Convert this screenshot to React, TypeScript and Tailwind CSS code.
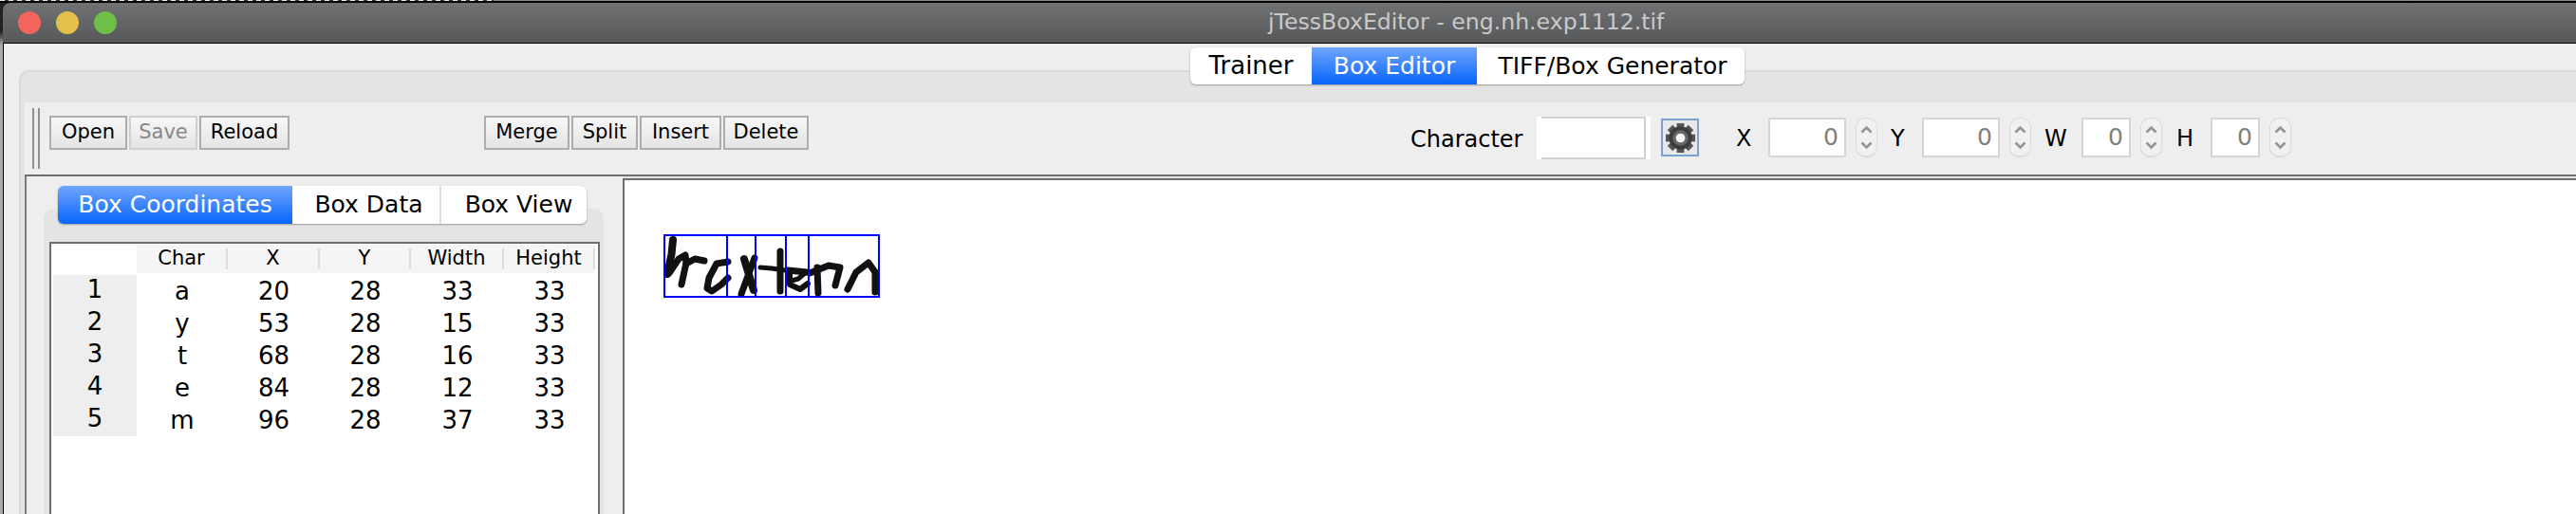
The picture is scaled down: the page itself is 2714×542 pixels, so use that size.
import React from "react";

const rows = [
  ["1", "a", "20", "28", "33", "33"],
  ["2", "y", "53", "28", "15", "33"],
  ["3", "t", "68", "28", "16", "33"],
  ["4", "e", "84", "28", "12", "33"],
  ["5", "m", "96", "28", "37", "33"],
];
const heads = ["Char", "X", "Y", "Width", "Height"];

function Btn({ label, w, off }: { label: string; w: string; off?: boolean }) {
  return (
    <div
      className={`${w} h-[36px] flex items-center justify-center border-2 text-[21px] bg-[linear-gradient(#f7f7f7,#e4e4e4)] ${
        off ? "border-[#cfcfcf] text-[#888888]" : "border-[#adadad] text-black"
      }`}
    >
      {label}
    </div>
  );
}

function Spinner() {
  return (
    <div className="ml-[10px] w-[23px] h-[42px] rounded-[10px] bg-[#f1f1f1] border border-[#dcdcdc] border-b-2 flex items-center justify-center shrink-0">
      <svg width="13" height="26" viewBox="0 0 13 26" fill="none" stroke="#949494" strokeWidth="2.6">
        <polyline points="1.5,7.5 6.5,2.5 11.5,7.5" />
        <polyline points="1.5,18.5 6.5,23.5 11.5,18.5" />
      </svg>
    </div>
  );
}

function Field({ w }: { w: string }) {
  return (
    <div className={`${w} h-[42px] bg-white border-2 border-[#d6d6d6] flex items-center justify-end pr-[6px] text-[25px] text-[#808080] shrink-0`}>
      0
    </div>
  );
}

function Gear() {
  return (
    <svg width="33" height="33" viewBox="0 0 34 34" className="blur-[0.7px]">
      {[0, 45, 90, 135].map((a) => (
        <rect key={a} x="13" y="1" width="8" height="32" fill="#555555" transform={`rotate(${a} 17 17)`} />
      ))}
      <circle cx="17" cy="17" r="12.5" fill="#3c3c3c" />
      <circle cx="17" cy="17" r="8.5" fill="#666666" />
      <circle cx="17" cy="17" r="5" fill="#f4f4f4" />
    </svg>
  );
}

function Handwriting() {
  return (
    <svg width="240" height="75" viewBox="0 0 240 75" className="block ml-[37px] mt-[53px]">
      <g fill="none" stroke="#111111" strokeLinecap="round" strokeLinejoin="round">
        <g strokeWidth="8">
          <polyline points="14,10 12.5,25 8,46" />
          <polyline points="89,30 99,63" />
        </g>
        <g strokeWidth="7">
          <polyline points="100,29 86,67" />
          <polyline points="166,39 167,66" />
          <polyline points="127,22 127,64" />
          <polyline points="10,45 20,30 27,26 28,34 23,57" />
          <polyline points="28,35 37,30 47,32" />
          <polyline points="72,33 60,35 52,50 50,61 55,64 65,57 72,50" />
          <polyline points="227,44 227,65" />
          <polyline points="198,62 207,44 220,34 227,44" />
          <polyline points="158,45 178,37 190,39 185,58" />
        </g>
        <g strokeWidth="5">
          <polyline points="106,39 118,40 132,42" />
          <polyline points="135,42 155,44" strokeWidth="7" />
          <polyline points="137,44 137,57 148,62 156,56" strokeWidth="6" />
          <polyline points="153,45 146,51 139,53" />
        </g>
      </g>
      <g fill="none" stroke="#0000ff" strokeWidth="2">
        <rect x="5" y="5" width="226" height="65" />
        <line x1="71" y1="5" x2="71" y2="70" />
        <line x1="101" y1="5" x2="101" y2="70" />
        <line x1="133" y1="5" x2="133" y2="70" />
        <line x1="157" y1="5" x2="157" y2="70" />
      </g>
    </svg>
  );
}

export default function App() {
  return (
    <div className="w-[2714px] h-[542px] overflow-hidden flex flex-col bg-[#aaaaaa] font-['DejaVu_Sans',sans-serif] text-black">
      <div className="h-[1px] shrink-0 bg-[#8a8a8a]">
        <div className="w-[520px] h-full bg-[repeating-linear-gradient(90deg,#e8e8e8_0,#e8e8e8_5px,#333333_5px,#333333_9px)]" />
      </div>
      <div className="h-[2px] shrink-0 bg-black" />
      <div className="flex-1 min-h-0 flex">
        <div className="w-[3px] shrink-0 bg-[linear-gradient(#222222_0,#222222_30px,#aaaaaa_45px)]" />
        <div className="flex-1 min-w-0 flex flex-col bg-[#222222]">
          <div className="h-[43px] shrink-0 rounded-tl-[8px] border-b border-black bg-[linear-gradient(#717274,#565758)] flex items-center pl-[16px]">
            <div className="flex gap-4">
              <div className="w-6 h-6 rounded-full bg-[#f2655c]" />
              <div className="w-6 h-6 rounded-full bg-[#e3bf4b]" />
              <div className="w-6 h-6 rounded-full bg-[#6dbf47]" />
            </div>
            <div className="ml-[1213px] text-[23.6px] text-[#c9c9c9] whitespace-nowrap">jTessBoxEditor - eng.nh.exp1112.tif</div>
          </div>

          <div className="flex-1 min-h-0 flex flex-col border-l border-black bg-[#eeeeee] pt-[28px] pl-[16px] relative">
            <div className="absolute left-[1250px] top-[4px] w-[584px] h-[39px] rounded-[6px] bg-white shadow-[0_1px_2px_#999999] flex items-center overflow-hidden text-[25px] z-10 whitespace-nowrap">
              <div className="w-[128px] text-center text-[26px]">Trainer</div>
              <div className="w-[174px] h-full flex items-center justify-center text-white bg-[linear-gradient(#70a5fb,#0765fb)]">Box Editor</div>
              <div className="flex-1 text-center pl-[4px]">TIFF/Box Generator</div>
            </div>

            <div className="flex-1 min-h-0 flex flex-col rounded-tl-[10px] bg-[#e4e4e4] border-t-2 border-l-2 border-[#dadada] pt-[32px] pl-[4px]">
              <div className="h-[76px] shrink-0 bg-[#eeeeee] flex items-start pl-[8px]">
                <div className="mt-[6px] flex gap-[4px]">
                  <div className="w-[2px] h-[64px] bg-[#8f8f8f]" />
                  <div className="w-[2px] h-[64px] bg-[#8f8f8f]" />
                </div>
                <div className="mt-[14px] ml-[10px] flex gap-[2px]">
                  <Btn label="Open" w="w-[82px]" />
                  <Btn label="Save" w="w-[72px]" off />
                  <Btn label="Reload" w="w-[95px]" />
                </div>
                <div className="mt-[14px] ml-[205px] flex gap-[2px]">
                  <Btn label="Merge" w="w-[90px]" />
                  <Btn label="Split" w="w-[70px]" />
                  <Btn label="Insert" w="w-[86px]" />
                  <Btn label="Delete" w="w-[90px]" />
                </div>
                <div className="mt-[14px] ml-[634px] h-[46px] flex items-center text-[24px] whitespace-nowrap">
                  <div className="w-[133px] shrink-0 pt-[3px]">Character</div>
                  <div className="w-[120px] h-[45px] bg-white px-[5px] shrink-0">
                    <div className="h-full border-2 border-l-0 border-[#d2d2d2]" />
                  </div>
                  <div className="ml-[11px] w-[40px] h-[40px] border-2 border-[#7aa3d2] bg-[#e8e8e8] flex items-center justify-center shrink-0">
                    <Gear />
                  </div>
                  <div className="ml-[39px] w-[34px] shrink-0 pt-[2px]">X</div>
                  <Field w="w-[82px]" />
                  <Spinner />
                  <div className="ml-[14px] w-[33px] shrink-0 pt-[2px]">Y</div>
                  <Field w="w-[82px]" />
                  <Spinner />
                  <div className="ml-[14px] w-[39px] shrink-0 pt-[2px]">W</div>
                  <Field w="w-[52px]" />
                  <Spinner />
                  <div className="ml-[15px] w-[36px] shrink-0 pt-[2px]">H</div>
                  <Field w="w-[52px]" />
                  <Spinner />
                </div>
              </div>

              <div className="flex-1 min-h-0 flex border-t-2 border-[#707070]">
                <div className="w-[630px] shrink-0 border-l-2 border-[#7a7a7a] bg-[#eeeeee] pt-[34px] pl-[18px]">
                  <div className="relative w-[590px] h-[400px] rounded-t-[10px] bg-[#e4e4e4] pt-[35px] pl-[6px]">
                    <div className="absolute left-[15px] top-[-24px] w-[557px] h-[40px] rounded-[6px] bg-white shadow-[0_1px_2px_#999999] flex items-center overflow-hidden text-[25px] whitespace-nowrap">
                      <div className="w-[247px] h-full flex items-center justify-center text-white bg-[linear-gradient(#70a5fb,#0765fb)]">Box Coordinates</div>
                      <div className="w-[157px] h-full flex items-center justify-center border-r-2 border-[#dddddd] pl-[6px]">Box Data</div>
                      <div className="flex-1 text-center pl-[10px]">Box View</div>
                    </div>
                    <div className="w-[580px] h-[400px] bg-white border-2 border-[#6e6e6e] pt-[1px]">
                      <div className="grid grid-cols-[90px_96px_97px_96px_98px_96px]">
                        <div className="h-[30px]" />
                        {heads.map((h) => (
                          <div key={h} className="h-[30px] bg-[#f5f5f5] flex items-center py-[4px]">
                            <div className="h-full flex-1 flex items-center justify-center border-r-2 border-[#dddddd] text-[21px]">{h}</div>
                          </div>
                        ))}
                        <div className="col-span-6 h-[2px]" />
                        {rows.map((r) => (
                          <React.Fragment key={r[0]}>
                            <div className="ml-[2px] h-[34px] bg-[#eeeeee] text-[26px] leading-[30px] text-center">{r[0]}</div>
                            {r.slice(1).map((c, i) => (
                              <div key={i} className="h-[34px] text-[26px] leading-[34px] text-center">{c}</div>
                            ))}
                          </React.Fragment>
                        ))}
                      </div>
                    </div>
                  </div>
                </div>
                <div className="flex-1 min-w-0 mt-[2px] bg-white border-t-2 border-l-2 border-[#6e6e6e]">
                  <Handwriting />
                </div>
              </div>
            </div>
          </div>
        </div>
      </div>
    </div>
  );
}
